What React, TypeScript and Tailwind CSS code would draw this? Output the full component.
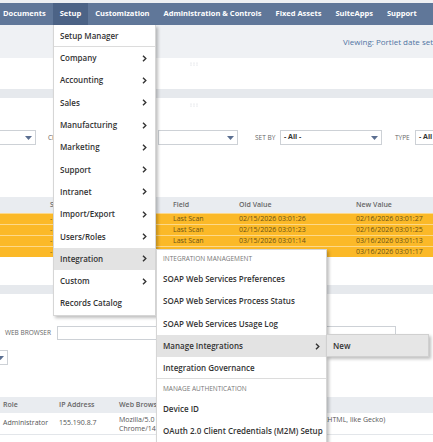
import React from 'react'

const NAV = ['Documents', 'Setup', 'Customization', 'Administration & Controls', 'Fixed Assets', 'SuiteApps', 'Support']

const SETUP_ITEMS = [
  'Company',
  'Accounting',
  'Sales',
  'Manufacturing',
  'Marketing',
  'Support',
  'Intranet',
  'Import/Export',
  'Users/Roles',
  'Integration',
  'Custom',
]

const CHANGES = [
  { old: '02/15/2026 03:01:26', next: '02/16/2026 03:01:27' },
  { old: '02/15/2026 03:01:23', next: '02/16/2026 03:01:25' },
  { old: '03/15/2026 03:01:14', next: '03/16/2026 03:01:13' },
  { old: '03/15/2026 03:01:16', next: '03/16/2026 03:01:17' },
]

function Chevron() {
  return (
    <svg width="5" height="7" viewBox="0 0 5 7" className="shrink-0">
      <path d="M1 0.8 L3.8 3.5 L1 6.2" fill="none" stroke="#333" strokeWidth="1.4" />
    </svg>
  )
}

function DragHandle() {
  return (
    <svg width="8" height="4" viewBox="0 0 8 4">
      {[1, 4, 7].map((x) => (
        <g key={x}>
          <circle cx={x} cy="1" r="0.6" fill="#cfd3d9" />
          <circle cx={x} cy="3" r="0.6" fill="#cfd3d9" />
        </g>
      ))}
    </svg>
  )
}

function Select({ className, value }: { className: string; value?: string }) {
  return (
    <div className={`flex h-[15px] shrink-0 items-center justify-between border border-[#cdd1d6] bg-white pl-[3px] pr-[3px] ${className}`}>
      <span className="whitespace-nowrap text-[7px] font-bold text-[#333]">{value}</span>
      <svg width="7" height="4" viewBox="0 0 7 4">
        <path d="M0 0 H7 L3.5 4 Z" fill="#5b6f91" />
      </svg>
    </div>
  )
}

export default function App() {
  return (
    <div className="relative h-[442px] w-[433px] overflow-hidden bg-white font-['Open_Sans',sans-serif]">
      {/* top strip + nav */}
      <div className="h-[3px] bg-[#eef0f3]" />
      <nav className="flex h-[22px] items-stretch bg-[#607799]">
        <div className="-ml-[4px] flex">
          {NAV.map((n) => (
            <div
              key={n}
              className={`flex shrink-0 items-center whitespace-nowrap px-[7px] text-[7.5px] font-bold text-white ${n === 'Setup' ? 'bg-[#4c6386]' : ''}`}
            >
              {n}
            </div>
          ))}
        </div>
      </nav>

      {/* viewing bar */}
      <div className="flex h-[33px] items-center bg-[#eff1f4] pl-[343px]">
        <span className="whitespace-nowrap text-[8px] text-[#4f74a3]">Viewing: Portlet date settings</span>
      </div>

      {/* portlet 1 */}
      <div className="flex h-[31px] justify-center bg-white pt-[4px]">
        <div className="ml-[-46px]">
          <DragHandle />
        </div>
      </div>
      <div className="h-[9px] bg-[#e6e9ed]" />

      {/* portlet 2 */}
      <div className="flex h-[187px] flex-col bg-white">
        <div className="flex justify-center pt-[5px]">
          <div className="ml-[-46px]">
            <DragHandle />
          </div>
        </div>
        <div className="mt-[23px] flex items-center text-[6.5px] text-[#666]">
          <Select className="-ml-[2px] w-[38px]" />
          <span className="ml-[12px] w-[110px] shrink-0 whitespace-nowrap">CHANGED FIELD</span>
          <Select className="w-[80px]" />
          <span className="ml-[17px] w-[25px] shrink-0 whitespace-nowrap">SET BY</span>
          <Select className="w-[102px]" value="- All -" />
          <span className="ml-[13px] w-[20px] shrink-0 whitespace-nowrap">TYPE</span>
          <Select className="w-[60px]" value="- All -" />
        </div>
        <div className="mt-[52px]">
          <div className="flex h-[16px] items-center bg-[#e9ecf0] text-[7px] font-semibold text-[#666]">
            <span className="w-[50px] shrink-0" />
            <span className="w-[123px] shrink-0">Set By</span>
            <span className="w-[66px] shrink-0">Field</span>
            <span className="w-[117px] shrink-0">Old Value</span>
            <span>New Value</span>
          </div>
          {CHANGES.map((c, i) => (
            <div key={i} className="flex h-[11px] items-center border-t border-[#fdd98a] bg-[#fbb928] text-[7px] text-[#6a5316]">
              <span className="w-[50px] shrink-0" />
              <span className="w-[123px] shrink-0">-</span>
              <span className="w-[66px] shrink-0">Last Scan</span>
              <span className="w-[117px] shrink-0">{c.old}</span>
              <span>{c.next}</span>
            </div>
          ))}
        </div>
      </div>
      <div className="h-[9px] bg-[#e6e9ed]" />

      {/* portlet 3 */}
      <div className="flex flex-col bg-white">
        <div className="mt-[32px] flex items-center">
          <span className="ml-[5px] w-[52px] shrink-0 whitespace-nowrap text-[6.5px] text-[#666]">WEB BROWSER</span>
          <div className="h-[14px] w-[339px] shrink-0 border border-[#cdd1d6]" />
        </div>
        <Select className="mt-[10px] -ml-[30px] w-[38px]" />
        <div className="mt-[32px] flex h-[16px] items-center bg-[#e9ecf0] text-[7px] font-semibold text-[#666]">
          <span className="w-[59px] shrink-0 pl-[3px]">Role</span>
          <span className="w-[60px] shrink-0">IP Address</span>
          <span>Web Browser</span>
        </div>
        <div className="flex h-[22px] items-center border-b border-[#e3e6ea] text-[7px] text-[#555]">
          <span className="w-[59px] shrink-0 pl-[3px]">Administrator</span>
          <span className="w-[60px] shrink-0">155.190.8.7</span>
          <div className="flex flex-col leading-[9px]">
            <div className="whitespace-nowrap">
              <span className="inline-block w-[202px] overflow-hidden align-top">Mozilla/5.0 (Windows NT 10.0; Win64; x64) AppleWebKit/537.36</span>
              <span>(KHTML, like Gecko)</span>
            </div>
            <span className="whitespace-nowrap">Chrome/145.0.0.0 Safari/537.36</span>
          </div>
        </div>
      </div>

      {/* setup menu */}
      <div className="absolute left-[53px] top-[25px] w-[103px] border border-t-0 border-[#d6d6d6] bg-white text-[8px] font-semibold text-[#333] shadow-[2px_2px_3px_rgba(0,0,0,0.25)]">
        <div className="flex h-[22px] items-center border-b border-[#dcdcdc] px-[6px]">Setup Manager</div>
        {SETUP_ITEMS.map((s) => (
          <div
            key={s}
            className={`flex h-[22.3px] items-center justify-between pl-[6px] pr-[8px] ${s === 'Integration' ? 'bg-[#e3e3e3]' : ''}`}
          >
            <span>{s}</span>
            <Chevron />
          </div>
        ))}
        <div className="flex h-[22.3px] items-center px-[6px]">Records Catalog</div>
      </div>

      {/* integration submenu */}
      <div className="absolute left-[156px] top-[249px] w-[171px] whitespace-nowrap border border-[#d6d6d6] bg-white text-[8px] font-semibold text-[#333] shadow-[2px_2px_3px_rgba(0,0,0,0.25)]">
        <div className="flex h-[18px] items-center px-[6px] text-[6.5px] font-normal text-[#777]">INTEGRATION MANAGEMENT</div>
        <div className="flex h-[22.3px] items-center px-[6px]">SOAP Web Services Preferences</div>
        <div className="flex h-[22.3px] items-center px-[6px]">SOAP Web Services Process Status</div>
        <div className="flex h-[22.3px] items-center px-[6px]">SOAP Web Services Usage Log</div>
        <div className="flex h-[22.3px] items-center justify-between bg-[#e3e3e3] pl-[6px] pr-[6px]">
          <span>Manage Integrations</span>
          <Chevron />
        </div>
        <div className="flex h-[22.3px] items-center border-b border-[#dcdcdc] px-[6px]">Integration Governance</div>
        <div className="flex h-[18px] items-center px-[6px] text-[6.5px] font-normal text-[#777]">MANAGE AUTHENTICATION</div>
        <div className="flex h-[22.3px] items-center px-[6px]">Device ID</div>
        <div className="flex h-[22.3px] items-center px-[6px]">OAuth 2.0 Client Credentials (M2M) Setup</div>
      </div>

      {/* manage integrations submenu */}
      <div className="absolute left-[326px] top-[334px] flex h-[23px] w-[103px] items-center border border-[#d0d0d0] bg-[#e6e6e6] px-[6px] text-[8px] font-semibold text-[#333] shadow-[2px_2px_3px_rgba(0,0,0,0.25)]">
        New
      </div>
    </div>
  )
}
